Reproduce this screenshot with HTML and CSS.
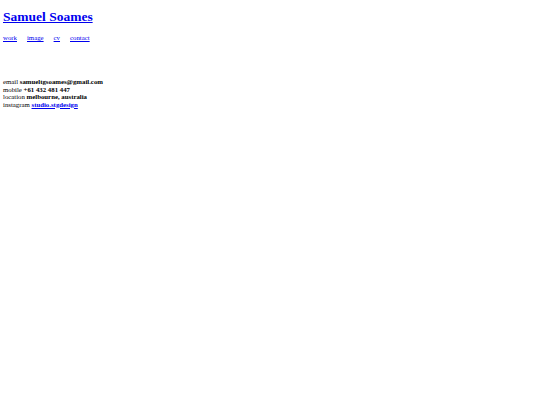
FILE: index.html
```html
<!DOCTYPE html>
<html>
<head>
<meta charset="utf-8">
<link rel="stylesheet" href="styles.css">
</head>
<body>
<header class="site-header">
  <h1 class="title"><a href="#">Samuel Soames</a></h1>
  <nav class="nav">
    <a href="#">work</a>
    <a href="#">image</a>
    <a href="#">cv</a>
    <a href="#">contact</a>
  </nav>
</header>
<main class="contact">
  <div class="row">email <b>samueltgsoames@gmail.com</b></div>
  <div class="row">mobile <b>+61 432 481 447</b></div>
  <div class="row">location <b>melbourne, australia</b></div>
  <div class="row">instagram <b><a href="#">studio.stgdesign</a></b></div>
</main>
</body>
</html>
```
FILE: styles.css
```css
html, body {
  margin: 0;
  padding: 0;
  background: #fff;
}
body {
  padding: 3px;
  font-family: "Liberation Serif", "Times New Roman", serif;
  color: #000;
}
a { color: #0000ee; }
.title {
  margin: 6px 0 0 0;
  font-family: "Liberation Serif", "Times New Roman", serif;
  font-size: 13.5px;
  line-height: 16px;
  font-weight: bold;
}
.nav {
  margin-top: 9px;
  display: flex;
  gap: 10px;
  font-size: 6.8px;
  line-height: 8px;
}
.contact {
  margin-top: 36px;
  font-size: 6.8px;
  line-height: 7.6px;
}
```
